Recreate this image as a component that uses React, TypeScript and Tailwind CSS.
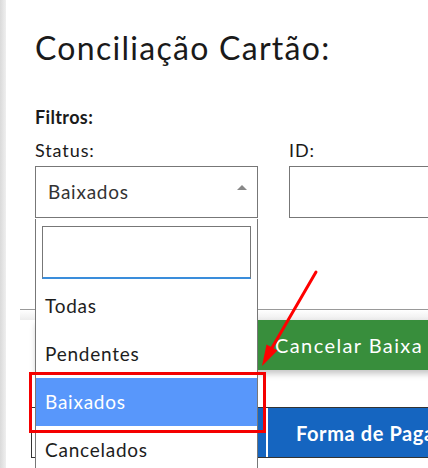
const options = ['Todas', 'Pendentes', 'Baixados', 'Cancelados']

function StatusDropdown({ selected }: { selected: string }) {
  return (
    <div className="absolute left-[35px] top-[219px] w-[223px] h-[260px] bg-white border border-[#777] border-t-0">
      <div className="px-[6px] pt-[7px] pb-[3px]">
        <div className="h-[53px] border border-[#777] border-b-2 border-b-[#3a8ddb]" />
      </div>
      {options.map((o) => (
        <div
          key={o}
          className={`h-[48px] flex items-center pl-[9px] text-[19px] tracking-[0.04em] ${o === selected ? 'bg-[#5897fb] text-white' : 'text-[#1d1d1d]'}`}
        >
          {o}
        </div>
      ))}
    </div>
  )
}

export default function App() {
  return (
    <div className="relative w-[428px] h-[468px] overflow-hidden bg-white flex font-['Lato',sans-serif]">
      <div className="w-[6px] shrink-0 bg-gradient-to-r from-[#dadada] to-[#efefef]" />

      <div className="flex-1 flex flex-col">
        <div className="pl-[29px]">
          <h1 className="mt-[28px] text-[32px] leading-[40px] tracking-[0.04em] text-[#1a1a1a]">Conciliação Cartão:</h1>
          <p className="mt-[38px] text-[18px] leading-[22px] font-bold text-[#1a1a1a] tracking-[0.02em]">Filtros:</p>
          <div className="mt-[11px] flex gap-[31px]">
            <div className="w-[223px] shrink-0">
              <p className="text-[18px] leading-[22px] text-[#1a1a1a] tracking-[0.05em]">Status:</p>
              <div className="mt-[5px] h-[52px] border border-[#777] flex items-center justify-between pl-[12px] pr-[10px]">
                <span className="text-[19px] tracking-[0.04em] text-[#333]">Baixados</span>
                <span className="w-0 h-0 border-x-[5px] border-x-transparent border-b-[5px] border-b-[#888] -mt-[10px]" />
              </div>
            </div>
            <div className="w-[200px] shrink-0">
              <p className="text-[18px] leading-[22px] text-[#1a1a1a] tracking-[0.05em]">ID:</p>
              <div className="mt-[5px] h-[52px] border border-[#777]" />
            </div>
          </div>
        </div>

        <div className="mt-[91px] ml-[14px] border-t border-[#999]">
          <div className="h-[10px] bg-gradient-to-b from-white to-[#ededed]" />
          <div className="ml-[16px] h-[50px] bg-[#388e3c] shadow-[0_4px_6px_rgba(0,0,0,0.22)] flex items-center pl-[239px] text-white text-[20px] tracking-[0.07em] whitespace-nowrap">
            Cancelar Baixa (0)
          </div>
          <div className="ml-[11px] mt-[37px] border-l border-[#333]">
            <div className="flex h-[51px] border-y border-[#333] pl-[4px] bg-white">
              <div className="flex-1 flex bg-[#1565c0]">
                <div className="w-[232px] shrink-0 border-r-2 border-white" />
                <div className="flex items-center pl-[28px] text-white text-[20px] font-bold whitespace-nowrap tracking-[0.03em]">
                  Forma de Pagamento
                </div>
              </div>
            </div>
          </div>
        </div>
      </div>

      <StatusDropdown selected="Baixados" />

      <div className="absolute left-[29px] top-[372px] w-[237px] h-[61px] border-[3px] border-[#f40000]" />

      <svg className="absolute left-0 top-0 w-[428px] h-[468px] pointer-events-none" viewBox="0 0 428 468">
        <line x1="316" y1="272" x2="269" y2="353" stroke="#ff0000" strokeWidth="3" strokeLinecap="round" />
        <polygon points="262,366 266.5,344.5 277.5,350.5" fill="#ff0000" />
      </svg>
    </div>
  )
}
